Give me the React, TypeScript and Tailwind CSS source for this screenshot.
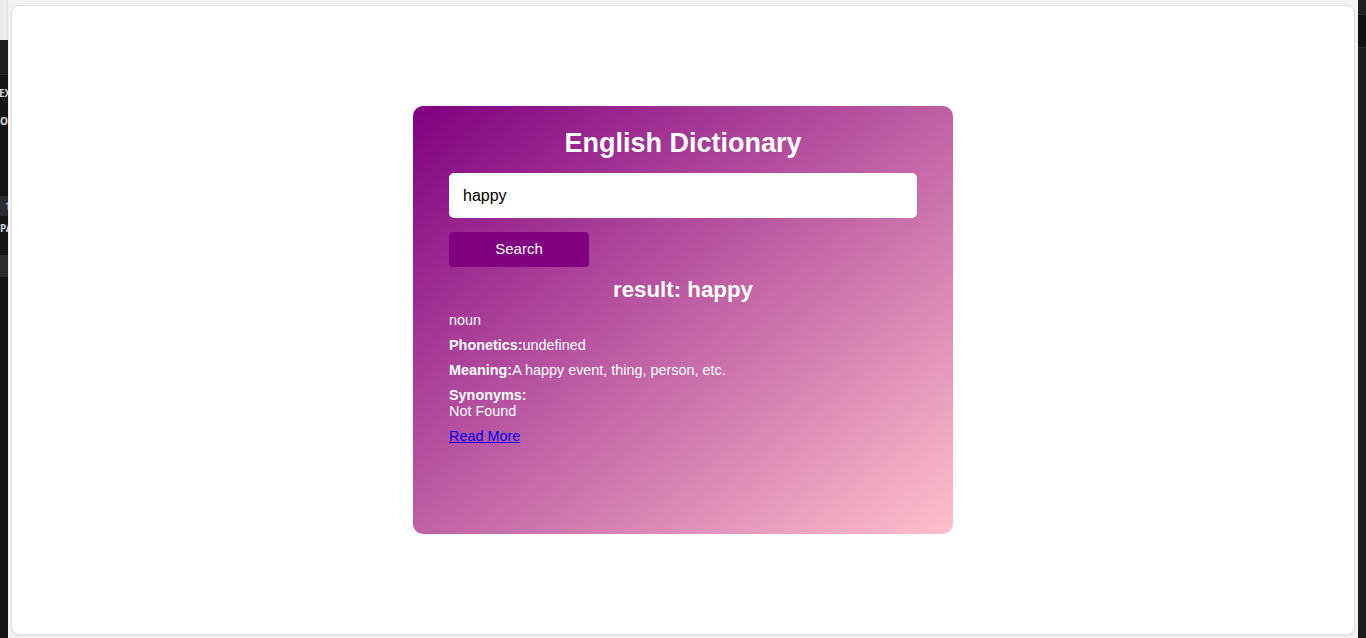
import React from 'react';

const font = { fontFamily: '"Liberation Sans", Arial, sans-serif' };

function LeftEdge() {
  return (
    <div className="w-[8px] h-full flex flex-col overflow-hidden shrink-0">
      <div className="h-[40px] bg-[#ececec] border-r border-[#dcdcdc]" />
      <div className="h-[35px] bg-[#1f1f1f] border-b border-[#2a2a2a]" />
      <div className="flex-1 bg-[#151515] flex flex-col text-[10px] font-bold text-[#d8d8d8] leading-[12px]">
        <div className="h-[12px] mt-[12px] -ml-[1px] whitespace-nowrap">EX</div>
        <div className="h-[12px] mt-[16px] whitespace-nowrap">O</div>
        <div className="h-[20px] mt-[69px] bg-[#2b2b31] text-[#9aa4c8] pl-[5px] leading-[20px]">1</div>
        <div className="h-[12px] mt-[6px] whitespace-nowrap">PA</div>
        <div className="h-[22px] mt-[21px] bg-[#2c2c2c]" />
      </div>
    </div>
  );
}

function RightEdge() {
  return (
    <div className="w-[8px] h-full flex flex-col shrink-0">
      <div className="h-[15px] bg-[#1e1e1e] border-b border-[#2c2c2c]" />
      <div className="h-[33px] bg-[#111111] border-b border-[#2e2e2e]" />
      <div className="flex-1 bg-[#1c1c1c]" />
    </div>
  );
}

function Dictionary() {
  return (
    <div className="w-[540px] h-[428px] rounded-[10px] bg-[linear-gradient(to_bottom_right,#800080,#ffc0cb)] px-[36px] pt-[22px] text-white" style={font}>
      <h1 className="text-[27px] leading-[31px] font-bold text-center">English Dictionary</h1>
      <input
        className="mt-[14px] w-full h-[45px] rounded-[5px] bg-white pl-[14px] text-[16px] text-black outline-none"
        defaultValue="happy"
        style={font}
      />
      <button className="mt-[14px] block w-[140px] h-[35px] rounded-[4px] bg-[#800080] text-[15px] text-white" style={font}>
        Search
      </button>
      <h2 className="mt-[10px] text-[22.3px] leading-[25px] font-bold text-center">result: happy</h2>
      <div className="mt-[10px] text-[14.4px] leading-[16px] flex flex-col gap-[9px]">
        <p>noun</p>
        <p><b>Phonetics:</b>undefined</p>
        <p><b>Meaning:</b>A happy event, thing, person, etc.</p>
        <p><b>Synonyms:</b><br />Not Found</p>
        <p><a href="#" className="text-[#0000ee] underline">Read More</a></p>
      </div>
    </div>
  );
}

export default function App() {
  return (
    <div className="w-full h-[638px] flex bg-[#f3f3f3] overflow-hidden">
      <LeftEdge />
      <div className="flex-1 h-full pl-[3px] pr-[3px] pt-[5px] pb-[3px]">
        <div className="w-full h-full bg-white rounded-[8px] border border-[#e2e2e2] shadow-[0_1px_2px_rgba(0,0,0,0.08)] flex items-center justify-center">
          <Dictionary />
        </div>
      </div>
      <RightEdge />
    </div>
  );
}
